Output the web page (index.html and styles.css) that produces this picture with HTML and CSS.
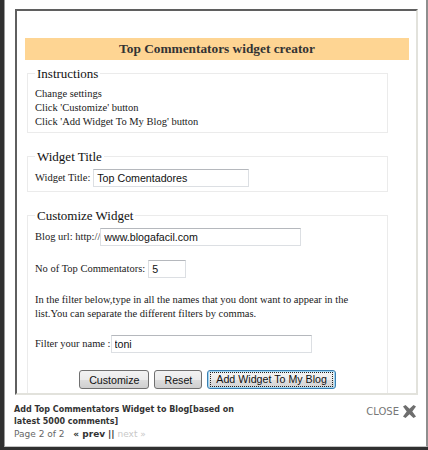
FILE: index.html
```html
<!DOCTYPE html>
<html lang="en">
    <head>
        <meta charset="UTF-8">
        <title>Top Commentators widget creator</title>
        <link rel="stylesheet" href="styles.css">
    </head>
    <body>
        <div class="lightbox">
            <div class="frame">
                <div class="frame-body">
                    <h1 class="banner">Top Commentators widget creator</h1>

                    <fieldset class="box box-first">
                        <legend>Instructions</legend>
                        <div class="line">Change settings</div>
                        <div class="line">Click 'Customize' button</div>
                        <div class="line">Click 'Add Widget To My Blog' button</div>
                    </fieldset>

                    <fieldset class="box">
                        <legend>Widget Title</legend>
                        <div class="row">
                            <label>Widget Title:</label>
                            <input class="field field-title" type="text" value="Top Comentadores">
                        </div>
                    </fieldset>

                    <fieldset class="box">
                        <legend>Customize Widget</legend>
                        <div class="row">
                            <label>Blog url: http://</label>
                            <input class="field field-url flush" type="text" value="www.blogafacil.com">
                        </div>
                        <div class="row spaced">
                            <label>No of Top Commentators:</label>
                            <input class="field field-num" type="text" value="5">
                        </div>
                        <p class="note">In the filter below,type in all the names that you dont want to appear in the list.You can separate the different filters by commas.</p>
                        <div class="row spaced">
                            <label>Filter your name :</label>
                            <input class="field field-url flush" type="text" value="toni">
                        </div>
                        <div class="buttons">
                            <button class="btn">Customize</button>
                            <button class="btn">Reset</button>
                            <button class="btn btn-focus"><span>Add Widget To My Blog</span></button>
                        </div>
                    </fieldset>
                </div>
            </div>

            <div class="caption">
                <div class="caption-text">
                    <div class="caption-title">Add Top Commentators Widget to Blog[based on latest 5000 comments]</div>
                    <div class="pager">Page 2 of 2 <span class="pager-links"><b>&laquo; prev</b> <b>||</b> <span class="off">next &raquo;</span></span></div>
                </div>
                <a class="close" href="#">CLOSE
                    <svg width="15" height="13" viewBox="0 0 15 13">
                        <path d="M1 1.5 L3.5 0 L7.5 3.8 L11.5 0 L14 1.5 L10.3 6.5 L14 11.5 L11.5 13 L7.5 9.2 L3.5 13 L1 11.5 L4.7 6.5 Z" fill="#6e6e6e"/>
                    </svg>
                </a>
            </div>
        </div>
    </body>
</html>
```

FILE: styles.css
```css
body {
    margin: 0;
    background-color: #303030;
}
.lightbox {
    margin-left: 4px;
    width: 403px;
    height: 437px;
    padding: 9px 9px 0 9px;
    background-color: white;
    border-left: 1px solid #9a9a9a;
    border-right: 2px solid #8e8e8e;
    border-bottom: 1px solid #c4c4c4;
}
.frame {
    margin-left: 1px;
    width: 403px;
    height: 386px;
    box-sizing: border-box;
    border-style: solid;
    border-width: 2px;
    border-color: #5f5f5f #e2e2dc #e2e2dc #5f5f5f;
    overflow: hidden;
}
.frame-body {
    padding: 27px 7px 0 8px;
    font-family: "Liberation Serif", "Times New Roman", serif;
    font-size: 10.5px;
    color: #1a1a1a;
}
.banner {
    margin: 0;
    height: 22px;
    line-height: 22px;
    background-color: #fed593;
    color: #333;
    text-align: center;
    font-size: 13.33px;
    font-weight: bold;
}
.box {
    width: 361px;
    box-sizing: border-box;
    margin: 16px 0 0 2px;
    padding: 5px 7px 4px 7px;
    border: 1px solid #ebebeb;
}
.box-first {
    margin-top: 6px;
    padding-top: 6px;
    padding-bottom: 3px;
}
.box legend {
    padding: 0 2px;
    font-size: 13px;
    line-height: 15px;
    color: #111;
}
.line {
    line-height: 14px;
}
.row {
    display: flex;
    align-items: center;
    height: 18px;
    line-height: 14px;
}
.row.spaced {
    margin-top: 14px;
}
.field {
    flex: none;
    height: 18px;
    box-sizing: border-box;
    margin: 0 0 0 3px;
    padding: 0 3px;
    border: 1px solid #dcdfe3;
    border-top-color: #b5b8bd;
    font-family: "Liberation Sans", Arial, sans-serif;
    font-size: 10.67px;
    color: #111;
}
.field.flush {
    margin-left: 0;
}
.field-title {
    width: 156px;
}
.field-url {
    width: 201px;
}
.field-num {
    width: 38px;
}
.note {
    margin: 15px 0 0 0;
    line-height: 14px;
}
.buttons {
    margin-top: 17px;
    display: flex;
    justify-content: center;
    gap: 5px;
}
.btn {
    height: 19px;
    padding: 0 9px;
    border: 1px solid #707070;
    border-radius: 3px;
    background: linear-gradient(#f2f2f2 0%, #ebebeb 50%, #dddddd 51%, #cfcfcf 100%);
    font-family: "Liberation Sans", Arial, sans-serif;
    font-size: 10.67px;
    color: #111;
}
.btn-focus {
    padding: 0 3px;
    border-color: #3c7fb1;
    background: linear-gradient(#f4f4f4 0%, #ececec 50%, #dfdfdf 51%, #d3d3d3 100%);
    box-shadow: inset 0 0 0 1px #9fd7f5;
}
.btn-focus span {
    display: block;
    padding: 0 5px;
    line-height: 13px;
    outline: 1px dotted #222;
}
.caption {
    margin-top: 9px;
    display: flex;
    justify-content: space-between;
    align-items: flex-start;
    font-family: "DejaVu Sans", Verdana, sans-serif;
}
.caption-text {
    width: 226px;
    font-size: 8px;
    line-height: 12px;
}
.caption-title {
    font-weight: bold;
    color: #333;
}
.pager {
    font-size: 9px;
    color: #666;
}
.pager-links {
    margin-left: 6px;
    color: #333;
}
.pager .off {
    color: #c8c8c8;
}
.close {
    margin-top: 1px;
    display: flex;
    align-items: center;
    gap: 3px;
    font-size: 10px;
    line-height: 12px;
    color: #777;
    text-decoration: none;
}
```
